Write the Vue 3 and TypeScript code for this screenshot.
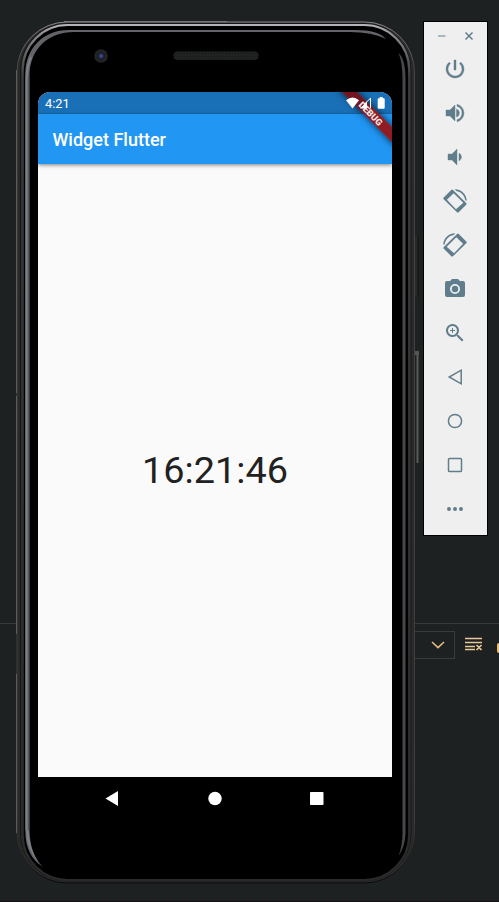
<script setup lang="ts">
type Tool = { name: string; paths: string[]; outline?: boolean; bold?: boolean }

const tools: Tool[] = [
  { name: 'Power', bold: true, paths: ['M13 3h-2v10h2V3zm4.83 2.17-1.42 1.42A6.92 6.92 0 0 1 19 12a7 7 0 1 1-11.42-5.42L6.17 5.17A8.96 8.96 0 0 0 3 12a9 9 0 1 0 14.83-6.83z'] },
  { name: 'Volume up', bold: true, paths: ['M3 9v6h4l5 5V4L7 9H3zm13.5 3A4.5 4.5 0 0 0 13.5 7.97v8.05A4.5 4.5 0 0 0 16.5 12zM14 3.23v2.06a7 7 0 0 1 0 13.42v2.06a9 9 0 0 0 0-17.54z'] },
  { name: 'Volume down', bold: true, paths: ['M18.5 12A4.5 4.5 0 0 0 16 7.97v8.05A4.5 4.5 0 0 0 18.5 12zM5 9v6h4l5 5V4L9 9H5z'] },
  { name: 'Rotate left', paths: ['M8.2.9.7 8.4q-.9.9 0 1.8L14 23.2q.8.8 1.7 0l7.5-7.5q.8-.9 0-1.8L10 .9q-.9-.8-1.8 0zM10.7 4.3 20.3 13.7 13 20.2 3.9 10.7z', 'M11.7.2C18 .2 23.5 5 23.7 11.4h-1.4C21.8 6.7 18 2.6 13.3 2z'] },
  { name: 'Rotate right', paths: ['M15.8.9l7.5 7.5q.9.9 0 1.8L10 23.2q-.8.8-1.7 0L.8 15.7q-.8-.9 0-1.8L14 .9q.9-.8 1.8 0zM13.3 4.3 3.7 13.7 11 20.2 20.1 10.7z', 'M12.3.2C6 .2.5 5 .3 11.4h1.4C2.2 6.7 6 2.6 10.7 2z'] },
  { name: 'Screenshot', paths: ['M9 2 7.17 4H4a2 2 0 0 0-2 2v12a2 2 0 0 0 2 2h16a2 2 0 0 0 2-2V6a2 2 0 0 0-2-2h-3.17L15 2H9zm3 15a5 5 0 1 1 0-10 5 5 0 0 1 0 10z', 'M12 8.8a3.2 3.2 0 1 0 0 6.4 3.2 3.2 0 0 0 0-6.4z'] },
  { name: 'Zoom', paths: ['M15.5 14h-.79l-.28-.27a6.5 6.5 0 1 0-.7.7l.27.28v.79l5 4.99L20.49 19l-4.99-5zm-6 0a4.5 4.5 0 1 1 0-9 4.5 4.5 0 0 1 0 9z', 'M12 10h-2v2H9v-2H7V9h2V7h1v2h2v1z'] },
  { name: 'Back', paths: ['M18.2 5.2v13.6L6.2 12z'], outline: true },
  { name: 'Home', paths: ['M12 5.4a6.6 6.6 0 1 0 0 13.2 6.6 6.6 0 0 0 0-13.2z'], outline: true },
  { name: 'Overview', paths: ['M6.6 5.5h10.8q1.1 0 1.1 1.1v10.8q0 1.1-1.1 1.1H6.6q-1.1 0-1.1-1.1V6.6q0-1.1 1.1-1.1z'], outline: true },
  { name: 'More', paths: ['M6 10a2 2 0 1 0 0 4 2 2 0 0 0 0-4zM12 10a2 2 0 1 0 0 4 2 2 0 0 0 0-4zM18 10a2 2 0 1 0 0 4 2 2 0 0 0 0-4z'] },
]
</script>

<template>
  <div class="desktop">
    <div class="editor">
      <div class="panel-bar">
        <div class="dropdown">
          <svg width="14" height="8" viewBox="0 0 14 8"><path d="M1 1l6 5.6L13 1" fill="none" stroke="#e8bf87" stroke-width="1.5" /></svg>
        </div>
        <svg class="clear-icon" width="18" height="14" viewBox="0 0 18 14">
          <path d="M0 1.5h17M0 5.5h17M0 9.5h10M0 12.5h10M11.5 8l5 5M16.5 8l-5 5" fill="none" stroke="#e8c799" stroke-width="1.7" />
        </svg>
        <span class="lock"></span>
      </div>
    </div>

    <main class="phone">
      <svg class="shell" width="404" height="864" viewBox="16 21 404 864" aria-hidden="true">
        <defs>
          <linearGradient id="rim" x1="0" y1="0" x2="0" y2="1">
            <stop offset="0" stop-color="#88888a" /><stop offset=".05" stop-color="#454546" />
            <stop offset=".93" stop-color="#3c3a3b" /><stop offset="1" stop-color="#080808" />
          </linearGradient>
          <linearGradient id="shine" x1="0" y1="0" x2="0" y2="1">
            <stop offset="0" stop-color="#b4b4ba" /><stop offset=".012" stop-color="#88888c" />
            <stop offset=".06" stop-color="#3b3b3d" /><stop offset="1" stop-color="#2b2a2b" />
          </linearGradient>
          <radialGradient id="lens"><stop offset="0" stop-color="#5063a0" /><stop offset=".5" stop-color="#232a4b" /><stop offset="1" stop-color="#16171b" /></radialGradient>
          <pattern id="mesh" width="3" height="3" patternUnits="userSpaceOnUse"><rect width="3" height="3" fill="#1c1d1d" /><path d="M0 0h1v1H0zM2 1h1v1H2z" fill="#292a2a" /></pattern>
        </defs>
        <path d="M415 237h3v60h-3z" fill="#29292a" /><path d="M418 237v60" stroke="#111" />
        <path d="M417.5 352v111" stroke="#5b5b5c" stroke-width="2" /><path d="M415.5 355v106" stroke="#222" />
        <path d="M415 351h4v4h-4z" fill="#555" />
        <rect x="17" y="22" width="397.5" height="861" rx="50" fill="#2b2a2b" stroke="url(#rim)" />
        <rect x="20.5" y="23.5" width="390.5" height="857.5" rx="47" fill="none" stroke="#171617" />
        <rect x="22.7" y="25" width="386.5" height="855" rx="45" fill="#000" stroke="url(#shine)" stroke-width="2.2" />
        <path d="M25.3 830V73C26 48 43 30 69 30H350Q378 29 386 39Q372 32 350 32H74C48 32 30 49 29.5 75V830Q30 855 43 867Q25 856 25.3 830z" fill="#636469" />
        <path d="M26.5 830V78Q27 66 31 57" fill="none" stroke="#7d8089" stroke-width="2" />
        <path d="M29 830V78" stroke="#43464b" />
        <path d="M26 830Q26.5 850 39 863Q29 849 28.5 830z" fill="#7d8089" />
        <path d="M398.5 53Q405.5 59 405.5 79V833Q405 847 398.5 856Q402.5 846 402.5 833V79Q402.5 62 398.5 53z" fill="#47484c" />
        <path d="M16.5 70v323M16.5 396v238M16.5 674v159" stroke="#5d5b5c" />
        <path d="M64 21.5h163" stroke="#777" />
        <circle cx="101" cy="56" r="6.8" fill="#232324" /><circle cx="101" cy="56" r="4.2" fill="url(#lens)" />
        <rect x="173.500" y="51.5" width="85" height="8.5" rx="4" fill="url(#mesh)" />
      </svg>

      <section class="screen">
        <header class="status">
          <span>4:21</span>
        </header>
        <h1 class="app-bar">Widget Flutter</h1>
        <div class="content"><time>16:21:46</time></div>
        <div class="debug">DEBUG</div>
        <svg class="status-icons" width="40" height="13" viewBox="0 0 40 13">
          <path d="M0 3.2Q6.5-2 13 3.2L6.5 11.5z" fill="#fff" />
          <path d="M14 11.5 21 4.5v7z" fill="#fff" /><path d="M18 7.5l6.5-6.3v10.3" fill="none" stroke="#fff" />
          <path d="M33.7 0h3v1.2h1q1 0 1 1v8.6q0 1-1 1h-5q-1 0-1-1V2.2q0-1 1-1h1z" fill="#fff" />
        </svg>
      </section>
      <nav class="nav">
        <svg width="220" height="18" viewBox="0 0 220 18" fill="#fff">
          <path d="M.5 8.5 13 1v15z" /><circle cx="110" cy="8.5" r="6.7" /><rect x="205" y="2" width="13.5" height="13" rx=".8" />
        </svg>
      </nav>
    </main>

    <aside class="toolbar">
      <div class="window-buttons">
        <svg width="36" height="10" viewBox="0 0 36 10" fill="none" stroke="#607d8b">
          <path d="M0 5h7.5" stroke-width="1.5" opacity=".65" /><path d="M27.5 1.5l7 7M34.5 1.5l-7 7" stroke-width="1.5" />
        </svg>
      </div>
      <button v-for="tool in tools" :key="tool.name" class="tool" type="button">
        <svg width="24" height="24" viewBox="0 0 24 24" :class="{ outline: tool.outline, bold: tool.bold }">
          <path v-for="d in tool.paths" :key="d" :d="d" fill-rule="evenodd" />
        </svg>
      </button>
    </aside>
  </div>
</template>

<style>
body { background: #1e2122; }
</style>

<style scoped>
.desktop { position: relative; width: 499px; height: 902px; display: flex; align-items: flex-start; overflow: hidden; background: #1e2122; font-family: Roboto, sans-serif; }
.editor { position: absolute; inset: 0; padding-top: 623px; box-sizing: border-box; border-bottom: 1px solid #111; }
.panel-bar { display: flex; align-items: flex-start; height: 40px; border-top: 1px solid #383838; padding: 7px 0 0 380px; }
.dropdown { width: 75px; height: 28px; box-sizing: border-box; border: 1px solid #3b3b3b; display: flex; align-items: center; justify-content: flex-end; padding-right: 9px; flex: none; }
.clear-icon { margin: 6px 0 0 10px; flex: none; }
.lock { width: 8px; height: 10px; margin: 12px 0 0 14px; border-radius: 2px; background: #edc373; flex: none; }
.phone { position: relative; width: 399px; height: 863px; margin: 21px 0 0 16px; padding: 71px 23px 0 22px; box-sizing: border-box; flex: none; }
.shell { position: absolute; left: 0; top: 0; }
.screen { position: relative; height: 685px; display: flex; flex-direction: column; overflow: hidden; border-radius: 12px 12px 0 0; background: #fafafa; }
.status { height: 22px; padding-left: 7px; background: #1a70b7; color: #fff; font-size: 12.8px; line-height: 23px; }
.app-bar { position: relative; margin: 0; height: 50px; box-sizing: border-box; padding-left: 14.5px; background: #2196f3; color: #fff; font-size: 18px; font-weight: 500; line-height: 52px; box-shadow: 0 1px 4px rgba(0, 0, 0, .5); }
.content { flex: 1; display: flex; align-items: center; justify-content: center; padding-bottom: 2px; color: #212121; font-size: 37.8px; }
.debug { position: absolute; left: 292.5px; top: 15.5px; width: 80px; height: 10.7px; transform: rotate(45deg); background: linear-gradient(90deg, #701620 36%, #901c23 52%); color: #f3e6e6; font-size: 9.2px; font-weight: 900; line-height: 11px; text-align: center; box-shadow: 0 0 7px rgba(0, 0, 0, .75); }
.status-icons { position: absolute; left: 308px; top: 5px; }
.nav { position: relative; height: 44px; display: flex; align-items: center; justify-content: center; }
.toolbar { position: relative; width: 65px; height: 515px; margin: 21px 0 0 8px; box-sizing: border-box; border: 1px solid #000; background: #efefef; flex: none; display: flex; flex-direction: column; }
.window-buttons { height: 25px; padding-top: 9px; padding-left: 14px; box-sizing: border-box; }
.window-buttons svg { display: block; }
.tool { height: 44px; width: 100%; padding: 0 2px 0 0; border: 0; background: none; display: flex; align-items: center; justify-content: center; flex: none; fill: #607d8b; }
.outline { fill: none; stroke: #607d8b; stroke-width: 1.5; }
.bold { stroke: #607d8b; stroke-width: .4; }
</style>
